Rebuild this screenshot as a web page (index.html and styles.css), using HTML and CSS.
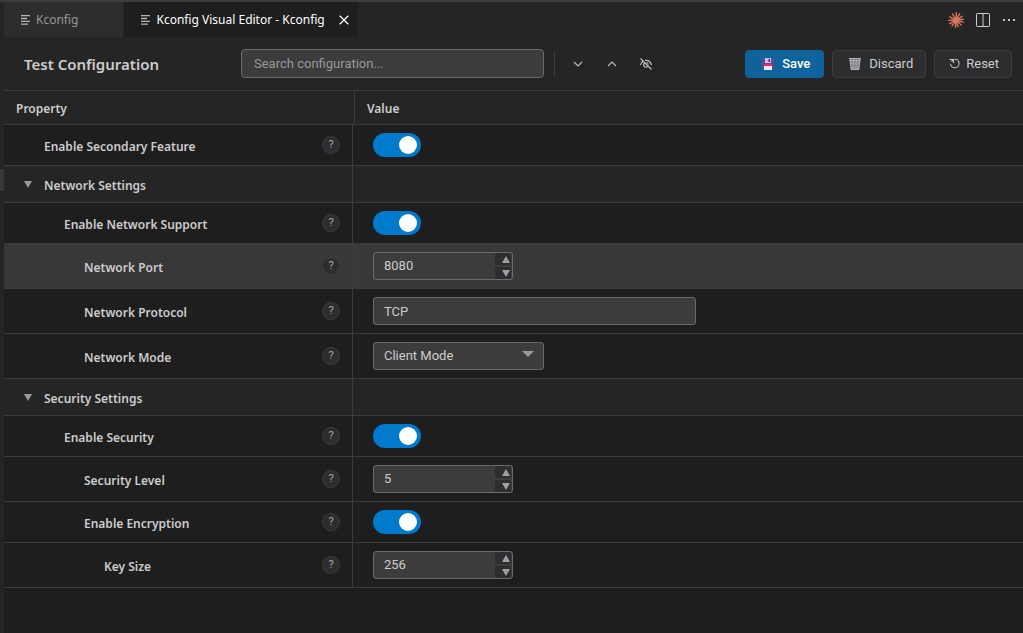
FILE: index.html
```html
<!DOCTYPE html>
<html lang="en">
<head>
<meta charset="utf-8">
<title>Kconfig Visual Editor - Kconfig</title>
<link rel="stylesheet" href="styles.css">
</head>
<body>
<div class="window">
  <div class="rail"><div class="rail-mark"></div></div>
  <main class="editor">
    <header class="tabbar">
      <div class="tab">
        <svg class="tab-icon" width="10" height="10" viewBox="0 0 10 10"><path d="M0 .7h9M0 3.500h6M0 6.300h9M0 9.200h7" /></svg>
        <span>Kconfig</span>
      </div>
      <div class="tab tab-active">
        <svg class="tab-icon" width="10" height="10" viewBox="0 0 10 10"><path d="M0 .7h9M0 3.500h6M0 6.300h9M0 9.200h7" /></svg>
        <span>Kconfig Visual Editor - Kconfig</span>
        <button class="plain" aria-label="Close tab"><svg width="10" height="10" viewBox="0 0 10 10"><path d="M.7.7l8.6 8.6M9.3.7L.7 9.3" stroke="#fff" stroke-width="1.3"/></svg></button>
      </div>
      <div class="tab-actions">
        <button class="plain" aria-label="Assistant"><svg width="16" height="16" viewBox="0 0 16 16"><g stroke="#d97757" stroke-width="1.4" stroke-linecap="round"><path d="M8 8L8.4.7M8 8l3.6-6.2M8 8l6-3.6M8 8l7.3-.7M8 8l7 2.2M8 8l5.2 5M8 8l2 6.7M8 8l-.7 7.3M8 8l-4 5.8M8 8l-6.3 3.6M8 8L.7 8.4M8 8L1.6 4.8M8 8L4.5 1.9"/></g><circle cx="8" cy="8" r="2.4" fill="#d97757"/></svg></button>
        <button class="plain" aria-label="Split editor"><svg width="14" height="14" viewBox="0 0 14 14"><rect x=".5" y=".5" width="13" height="13" rx=".8" fill="none" stroke="#d0d0d0"/><path d="M7 1v12" stroke="#d0d0d0"/></svg></button>
        <button class="plain" aria-label="More actions"><svg width="14" height="14" viewBox="0 0 14 14"><path d="M1 6h2v2H1zM6 6h2v2H6zM11 6h2v2h-2z" fill="#c5c5c5"/></svg></button>
      </div>
    </header>

    <section class="toolbar">
      <h1>Test Configuration</h1>
      <input class="search" type="text" aria-label="Search configuration" placeholder="Search configuration...">
      <div class="tools">
        <button class="plain" aria-label="Expand all"><svg width="14" height="14" viewBox="0 0 14 14"><path d="M3 5l4 4 4-4"/></svg></button>
        <button class="plain" aria-label="Collapse all"><svg width="14" height="14" viewBox="0 0 14 14"><path d="M3 9l4-4 4 4"/></svg></button>
        <button class="plain" aria-label="Toggle hidden"><svg width="14" height="14" viewBox="0 0 14 14"><path d="M1.500 1.500l11 11M1.500 8C2 5.800 3 4.600 4.400 3.900M6 3.400c3.300-.4 5.700 1.400 6.500 4.600M5.300 6.200a2.300 2.300 0 0 0 3.400 3.200M7.500 5.500a2.300 2.300 0 0 1 1.800 2"/></svg></button>
      </div>
      <div class="actions">
        <button class="btn btn-primary"><svg width="12" height="12" viewBox="0 0 12 12"><path d="M0 0h11l1 1v11H0z" fill="#5b4a91"/><path d="M3 0h6v5H3z" fill="#c9bfe0"/><path d="M6.500 1h1.500v3H6.500z" fill="#3a2e63"/><path d="M2 6h8v6H2z" fill="#f3e9f2"/><path d="M2 6h8v2H2z" fill="#e0315f"/></svg>Save</button>
        <button class="btn"><svg width="12" height="12" viewBox="0 0 12 12"><path d="M0 0h12v2h-.5L10.300 12H1.700L.5 2H0z" fill="#b4b1ba"/><path d="M0 1.500h12M2 3l7 8M5 3l5 6M8 3l2 2.500M2 6l4 5M10 3l-7 8M7 3L2 9M4 3L2 5.500M10 6l-4 5" stroke="#66636d" stroke-width=".7"/></svg>Discard</button>
        <button class="btn btn-reset"><svg width="11" height="11" viewBox="0 0 11 11"><path d="M.5 1.500h4v3.500M4.200 1.800L2.500 3.500M5.500 1.200A4.300 4.300 0 1 1 1.500 6" fill="none" stroke="#ccc" stroke-width="1.1"/></svg>Reset</button>
      </div>
    </section>

    <table class="config">
      <colgroup><col class="col-name"><col></colgroup>
      <thead>
        <tr><td colspan="2"><div class="head"><span class="head-name">Property</span><span class="head-value">Value</span></div></td></tr>
      </thead>
      <tbody>
        <tr class="row-toggle"><th scope="row"><div class="name level-1"><label for="secondary">Enable Secondary Feature</label><button class="help">?</button></div></th><td><input id="secondary" class="toggle" type="checkbox" checked></td></tr>
        <tr class="row-group"><th scope="row"><div class="name level-0"><button class="twisty" aria-label="Collapse Network Settings"><svg width="8" height="7" viewBox="0 0 8 7"><path d="M0 0h8L4 7z" fill="#999"/></svg></button><span>Network Settings</span></div></th><td></td></tr>
        <tr class="row-toggle"><th scope="row"><div class="name level-2"><label for="network">Enable Network Support</label><button class="help">?</button></div></th><td><input id="network" class="toggle" type="checkbox" checked></td></tr>
        <tr class="row-field row-hover"><th scope="row"><div class="name level-3"><label for="port">Network Port</label><button class="help">?</button></div></th><td><div class="number"><input id="port" type="text" inputmode="numeric" value="8080"><div class="spin"><button aria-label="Increase"><svg width="8" height="7" viewBox="0 0 8 7"><path d="M0 7h8L4 0z"/></svg></button><button aria-label="Decrease"><svg width="8" height="7" viewBox="0 0 8 7"><path d="M0 0h8L4 7z"/></svg></button></div></div></td></tr>
        <tr class="row-field"><th scope="row"><div class="name level-3"><label for="protocol">Network Protocol</label><button class="help">?</button></div></th><td><input id="protocol" class="text" type="text" value="TCP"></td></tr>
        <tr class="row-field"><th scope="row"><div class="name level-3"><label for="mode">Network Mode</label><button class="help">?</button></div></th><td><div class="select"><select id="mode"><option>Client Mode</option></select><svg width="12" height="6" viewBox="0 0 12 6"><path d="M0 0h12L6 6z" fill="#999"/></svg></div></td></tr>
        <tr class="row-group"><th scope="row"><div class="name level-0"><button class="twisty" aria-label="Collapse Security Settings"><svg width="8" height="7" viewBox="0 0 8 7"><path d="M0 0h8L4 7z" fill="#999"/></svg></button><span>Security Settings</span></div></th><td></td></tr>
        <tr class="row-toggle"><th scope="row"><div class="name level-2"><label for="security">Enable Security</label><button class="help">?</button></div></th><td><input id="security" class="toggle" type="checkbox" checked></td></tr>
        <tr class="row-field"><th scope="row"><div class="name level-3"><label for="level">Security Level</label><button class="help">?</button></div></th><td><div class="number"><input id="level" type="text" inputmode="numeric" value="5"><div class="spin"><button aria-label="Increase"><svg width="8" height="7" viewBox="0 0 8 7"><path d="M0 7h8L4 0z"/></svg></button><button aria-label="Decrease"><svg width="8" height="7" viewBox="0 0 8 7"><path d="M0 0h8L4 7z"/></svg></button></div></div></td></tr>
        <tr class="row-toggle"><th scope="row"><div class="name level-3"><label for="encryption">Enable Encryption</label><button class="help">?</button></div></th><td><input id="encryption" class="toggle" type="checkbox" checked></td></tr>
        <tr class="row-field"><th scope="row"><div class="name level-4"><label for="keysize">Key Size</label><button class="help">?</button></div></th><td><div class="number"><input id="keysize" type="text" inputmode="numeric" value="256"><div class="spin"><button aria-label="Increase"><svg width="8" height="7" viewBox="0 0 8 7"><path d="M0 7h8L4 0z"/></svg></button><button aria-label="Decrease"><svg width="8" height="7" viewBox="0 0 8 7"><path d="M0 0h8L4 7z"/></svg></button></div></div></td></tr>
      </tbody>
    </table>
  </main>
</div>
</body>
</html>
```
FILE: styles.css
```css
* { box-sizing: border-box; }

body {
  margin: 0;
  background: #1e1e1e;
  color: #cccccc;
  font: 12px/18px "Noto Sans", "Open Sans", sans-serif;
}

button, input, select {
  margin: 0;
  color: inherit;
  font: 13px/18px Roboto, "Liberation Sans", sans-serif;
}

svg { display: block; flex: none; }

.window {
  display: flex;
  min-height: 100vh;
  border-top: 2px solid #3c3c3c;
}

.rail {
  flex: none;
  width: 4px;
  padding-top: 167px;
  background: #252526;
}

.rail-mark { height: 22px; background: #37373d; }

.editor { flex: 1; min-width: 0; }

.plain {
  display: flex;
  padding: 0;
  border: 0;
  background: none;
}

/* Tabs */
.tabbar { display: flex; background: #252526; }

.tab {
  display: flex;
  align-items: center;
  gap: 5px;
  height: 35px;
  padding: 0 45px 0 17px;
  margin-right: 1px;
  background: #2d2d2d;
  color: #969696;
}

.tab-active {
  padding: 0 9px 0 17px;
  background: #1e1e1e;
  color: #ffffff;
}

.tab-active .plain { margin-left: 9px; }

.tab-icon { fill: none; stroke: #b4b4b4; stroke-width: 1.3; }

.tab-actions {
  display: flex;
  align-items: center;
  gap: 12px;
  margin-left: auto;
  padding-right: 7px;
}

/* Toolbar */
.toolbar {
  display: flex;
  align-items: center;
  height: 54px;
  padding: 0 11px 0 20px;
  border-bottom: 1px solid #3c3c3c;
  background: #252526;
}

h1 {
  flex: none;
  width: 217px;
  margin: 0;
  font-size: 15px;
  font-weight: 600;
}

.search {
  flex: 0 1 303px;
  min-width: 0;
  height: 29px;
  padding: 0 12px;
  border: 1px solid #6b6b6b;
  border-radius: 4px;
  background: #3c3c3c;
}

.search::placeholder { color: #989898; opacity: 1; }

.tools {
  display: flex;
  align-items: center;
  gap: 20px;
  height: 26px;
  margin-left: 10px;
  padding-left: 16px;
  border-left: 1px solid #3c3c3c;
}

.tools svg { fill: none; stroke: #c0c0c0; stroke-width: 1.1; }

.actions { display: flex; gap: 8px; margin-left: auto; }

.btn {
  display: flex;
  align-items: center;
  gap: 8px;
  height: 28px;
  padding: 0 12px 0 16px;
  border: 1px solid #3c3c3c;
  border-radius: 4px;
  background: #2d2d30;
}

.btn-primary {
  padding-right: 13px;
  border-color: #0e639c;
  background: #0e639c;
  color: #ffffff;
  font-weight: 500;
}

.btn-reset { gap: 6px; padding: 0 12px 0 14px; }

/* Property table */
.config {
  width: 100%;
  border-collapse: separate;
  border-spacing: 0;
  table-layout: fixed;
}

.col-name { width: 349px; }

th, td {
  padding: 0;
  border-bottom: 1px solid #3c3c3c;
  text-align: left;
  vertical-align: middle;
}

th { border-right: 1px solid #3c3c3c; font-weight: 600; }

tbody td { padding-left: 20px; }

thead, .row-group { background: #252526; }

.head { display: flex; font-weight: 600; }

.head span { padding: 9px 12px 6px; }

.head .head-name { width: 351px; border-right: 1px solid #3c3c3c; }

.row-toggle { height: 41px; }
.row-group { height: 37px; }
.row-field { height: 45px; }
.row-hover { background: #383838; }

.name {
  display: flex;
  align-items: center;
  padding-right: 12px;
}

.name label, .name span { padding-top: 3px; }

.level-0 { padding-left: 20px; }
.level-1 { padding-left: 40px; }
.level-2 { padding-left: 60px; }
.level-3 { padding-left: 80px; }
.level-4 { padding-left: 100px; }

.twisty {
  display: flex;
  width: 20px;
  padding: 0;
  border: 0;
  background: none;
}

.help {
  width: 18px;
  height: 18px;
  margin-left: auto;
  padding: 0;
  border: 1px solid #3c3c3c;
  border-radius: 50%;
  background: #2d2d30;
  color: #a8a8a8;
  font-size: 11px;
  line-height: 16px;
}

.toggle {
  display: block;
  width: 48px;
  height: 24px;
  padding: 3px 4px;
  border-radius: 12px;
  appearance: none;
  background: #007acc;
}

.toggle::before {
  display: block;
  width: 18px;
  height: 18px;
  margin-left: auto;
  border-radius: 50%;
  background: #ffffff;
  content: "";
}

.number, .text, .select {
  height: 28px;
  border: 1px solid #6b6b6b;
  border-radius: 3px;
  background: #3c3c3c;
}

.text { display: block; width: 323px; padding: 0 10px; }

.number { display: flex; width: 140px; padding-right: 1px; }

.number input {
  flex: 1;
  min-width: 0;
  padding: 0 10px;
  border: 0;
  background: none;
}

.spin {
  display: grid;
  grid-template-rows: 1fr 1fr;
  gap: 2px;
  width: 16px;
}

.spin button {
  display: flex;
  align-items: center;
  justify-content: flex-end;
  padding: 0 1px 0 0;
  border: 0;
  border-radius: 2px;
  background: #2d2d30;
}

.spin svg { fill: #a0a0a0; }

.select { display: grid; width: 171px; }

.select select {
  grid-area: 1 / 1;
  padding: 0 28px 0 10px;
  border: 0;
  appearance: none;
  background: none;
}

.select svg {
  grid-area: 1 / 1;
  align-self: center;
  justify-self: end;
  margin: 0 9px 4px 0;
  pointer-events: none;
}
```
